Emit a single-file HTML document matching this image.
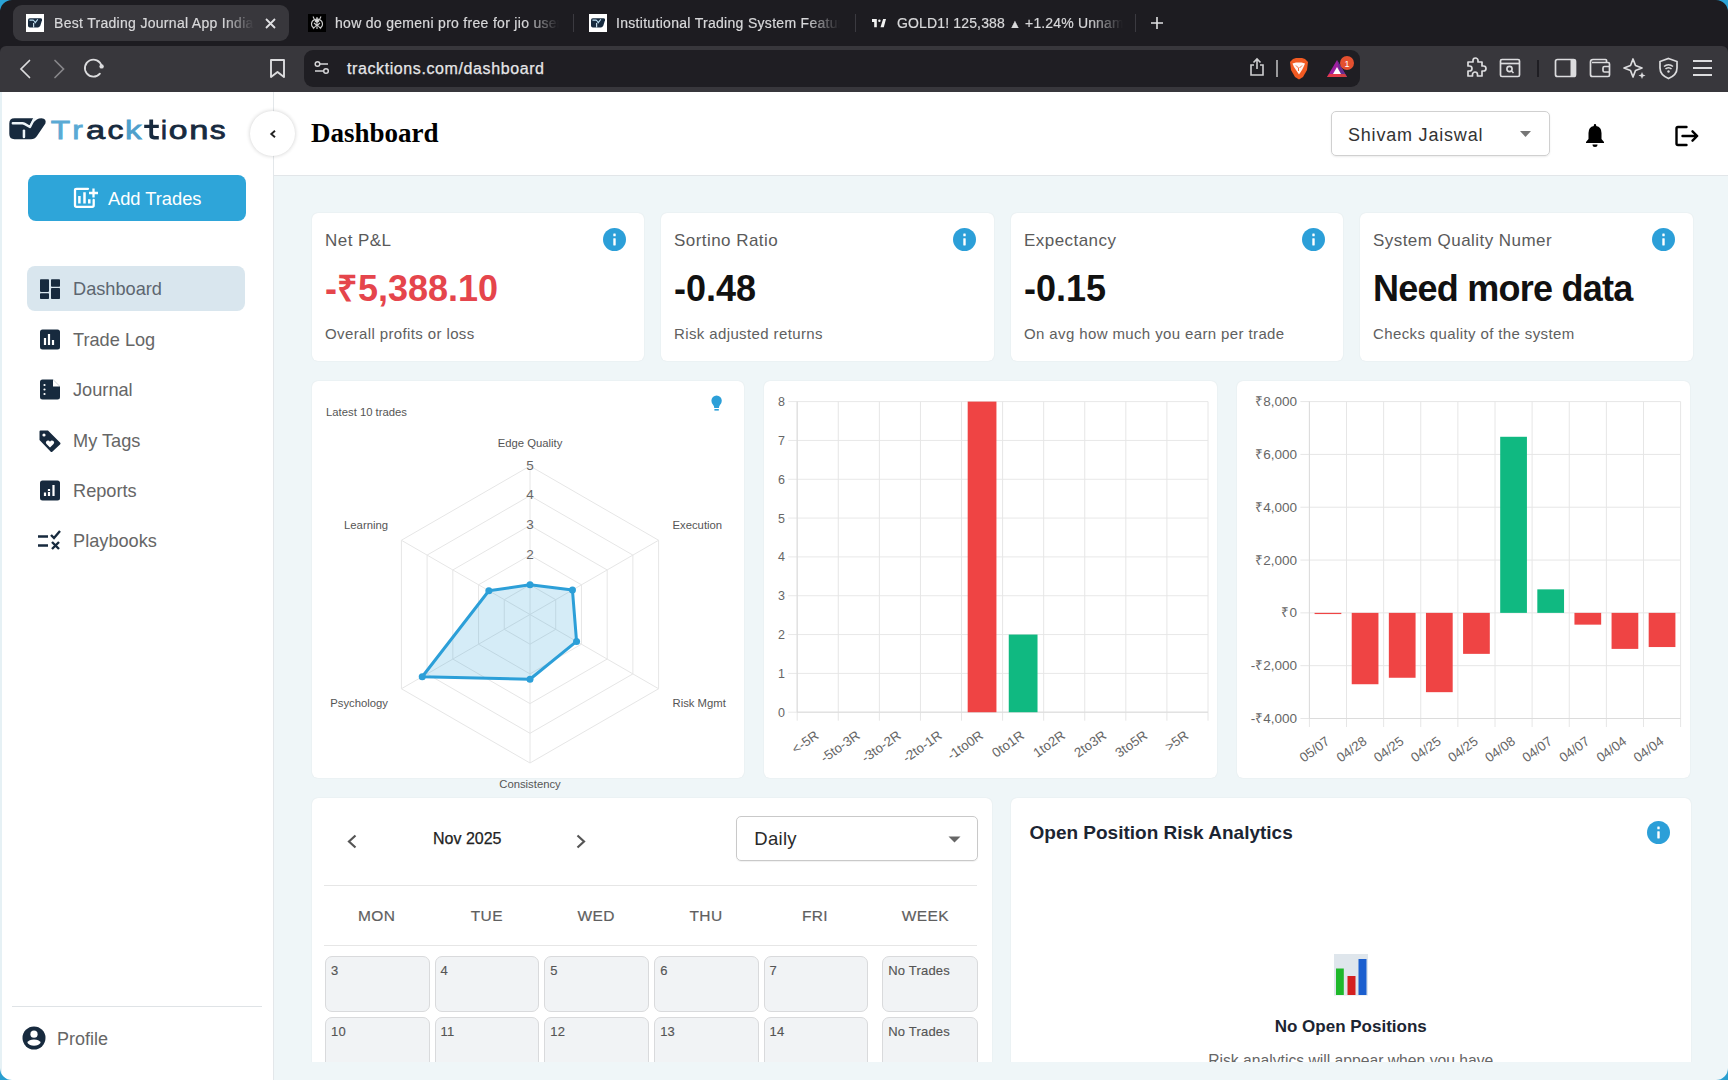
<!DOCTYPE html>
<html><head><meta charset="utf-8">
<style>
*{box-sizing:border-box;margin:0;padding:0}
html,body{width:1728px;height:1080px;overflow:hidden;background:#1c1b20;font-family:"Liberation Sans",sans-serif}
.abs{position:absolute}
#tabbar{position:absolute;left:0;top:0;width:1728px;height:46px;background:#1d1c21}
#toolbar{position:absolute;left:0;top:46px;width:1728px;height:46px;background:#38373c;border-radius:6px 6px 0 0}
#url{position:absolute;left:304px;top:50px;width:1056px;height:37px;background:#1f1e23;border-radius:9px}
.tab{position:absolute;top:5px;height:36px;color:#d8d8da;font-size:14px;line-height:36px;white-space:nowrap;overflow:hidden;letter-spacing:0.3px;-webkit-text-stroke:0.2px #d8d8da}
#page{position:absolute;left:0;top:92px;width:1728px;height:988px;background:#eff6f8;overflow:hidden}
#sidebar{position:absolute;left:0;top:0;width:274px;height:988px;background:#fff;border-right:1px solid #e3e7ea}
#header{position:absolute;left:274px;top:0;width:1454px;height:84px;background:#fff;border-bottom:1px solid #e2e6e9}
.card{position:absolute;background:#fff;border-radius:6px;box-shadow:0 0 1.5px rgba(0,0,0,0.09)}
.ct{position:absolute;font-size:17px;line-height:17px;color:#5a5a5a;letter-spacing:0.45px;white-space:nowrap}
.cv{position:absolute;font-size:36px;line-height:36px;font-weight:bold;color:#111;white-space:nowrap}
.cs{position:absolute;font-size:15px;line-height:15px;color:#606060;letter-spacing:0.38px;white-space:nowrap}
.info{position:absolute}
.cell{position:absolute;height:56.5px;background:#f1f3f5;border:1px solid #d9dadc;border-radius:7px}
.cell span{position:absolute;left:5px;top:7px;font-size:13px;line-height:13px;color:#555;-webkit-text-stroke:0.15px #555;letter-spacing:0.2px;white-space:nowrap}
.nav{position:absolute;left:27px;width:218px;height:45px;border-radius:8px}
.navt{position:absolute;left:73px;font-size:18.2px;color:#666;line-height:22px}
</style></head><body>
<div id="tabbar"></div>
<div id="toolbar"></div>
<div id="url"></div>
<!-- corners -->
<svg class="abs" style="left:0;top:0;z-index:5" width="14" height="14"><path d="M0 0H12A12 12 0 0 0 0 12Z" fill="#2aa3d6"/></svg>
<svg class="abs" style="left:1714px;top:0;z-index:5" width="14" height="14"><path d="M14 0H2A12 12 0 0 1 14 12Z" fill="#2aa3d6"/></svg>
<svg class="abs" style="left:0;top:1066px;z-index:5" width="14" height="14"><path d="M0 14H12A12 12 0 0 1 0 2Z" fill="#2a9fd0"/></svg>
<svg class="abs" style="left:1714px;top:1066px;z-index:5" width="14" height="14"><path d="M14 14H2A12 12 0 0 0 14 2Z" fill="#2a9fd0"/></svg>
<!-- active tab -->
<div class="abs" style="left:13px;top:5px;width:276px;height:36px;background:#38373c;border-radius:9px"></div>
<div class="abs" style="left:26px;top:14px;width:18px;height:18px;background:#fff"><svg width="18" height="18" viewBox="0 0 18 18"><g transform="translate(1.8 4) scale(0.4 0.45)"><path d="M5 0.5H32Q37 0.5 35.5 5L31.5 16Q29.5 21 25 21H5Q0.5 21 0.5 16.5V5Q0.5 0.5 5 0.5Z" fill="#172a3e"/><path d="M5 4.6H12.5Q14.5 4.6 15.5 6.2L18.5 10.5L24.5 3.5" stroke="#b8dcef" stroke-width="2.6" fill="none" stroke-linecap="round"/><rect x="13.2" y="11" width="2.8" height="10" fill="#cfe6f2"/></g></svg></div>
<div class="tab" style="left:54px;width:200px;-webkit-mask-image:linear-gradient(90deg,#000 85%,transparent)">Best Trading Journal App India</div>
<svg class="abs" style="left:265px;top:18px" width="11" height="11"><path d="M1 1L10 10M10 1L1 10" stroke="#e0e0e2" stroke-width="1.8"/></svg>
<!-- tab2 -->
<div class="abs" style="left:307.5px;top:14px;width:18px;height:18px;background:#000"><svg width="18" height="18" viewBox="0 0 18 18" fill="none" stroke="#cfcfcf" stroke-width="1.1"><ellipse cx="9" cy="6.5" rx="2" ry="1.6" fill="#e0e0e0"/><path d="M9 3V5M9 8V15M5 2.5L6.5 5.5Q3.5 7 3.5 10Q3.5 13 6 14M13 2.5L11.5 5.5Q14.5 7 14.5 10Q14.5 13 12 14M5 15L9 10.5L13 15M6 9L9 11.5L12 9"/></svg></div>
<div class="tab" style="left:335px;width:224px;-webkit-mask-image:linear-gradient(90deg,#000 85%,transparent)">how do gemeni pro free for jio user</div>
<div class="abs" style="left:573px;top:14px;width:1px;height:18px;background:#3b3a40"></div>
<!-- tab3 -->
<div class="abs" style="left:589px;top:14px;width:18px;height:18px;background:#fff"><svg width="18" height="18" viewBox="0 0 18 18"><g transform="translate(1.8 4) scale(0.4 0.45)"><path d="M5 0.5H32Q37 0.5 35.5 5L31.5 16Q29.5 21 25 21H5Q0.5 21 0.5 16.5V5Q0.5 0.5 5 0.5Z" fill="#172a3e"/><path d="M5 4.6H12.5Q14.5 4.6 15.5 6.2L18.5 10.5L24.5 3.5" stroke="#b8dcef" stroke-width="2.6" fill="none" stroke-linecap="round"/><rect x="13.2" y="11" width="2.8" height="10" fill="#cfe6f2"/></g></svg></div>
<div class="tab" style="left:616px;width:224px;-webkit-mask-image:linear-gradient(90deg,#000 85%,transparent)">Institutional Trading System Features</div>
<div class="abs" style="left:855px;top:14px;width:1px;height:18px;background:#3b3a40"></div>
<!-- tab4 -->
<svg class="abs" style="left:870px;top:16px" width="18" height="14" viewBox="0 0 18 14"><path d="M2 3.1H6.8V11.3H4.2V6H2Z" fill="#f2f2f2"/><circle cx="9.4" cy="4.7" r="1.2" fill="#f2f2f2"/><path d="M13.1 3.1H16L13.8 11.3H10.5Z" fill="#f2f2f2"/></svg>
<div class="tab" style="left:897px;width:226px;letter-spacing:0.15px;-webkit-mask-image:linear-gradient(90deg,#000 85%,transparent)">GOLD1! 125,388 <span style="font-size:12px">&#9650;</span> +1.24% Unnamed</div>
<div class="abs" style="left:1135px;top:14px;width:1px;height:18px;background:#3b3a40"></div>
<svg class="abs" style="left:1150px;top:16px" width="14" height="14"><path d="M7 1V13M1 7H13" stroke="#e0e0e2" stroke-width="1.6"/></svg>
<!-- toolbar icons -->
<svg class="abs" style="left:18px;top:58px" width="14" height="22"><path d="M11.5 2.5L3 11L11.5 19.5" stroke="#dcdcde" stroke-width="1.7" fill="none" stroke-linecap="round"/></svg>
<svg class="abs" style="left:52px;top:58px" width="14" height="22"><path d="M3 2.5L11.5 11L3 19.5" stroke="#87868a" stroke-width="1.7" fill="none" stroke-linecap="round"/></svg>
<svg class="abs" style="left:82px;top:57px" width="24" height="24"><path d="M17.9 16.6A8.5 8.5 0 1 1 19.6 8.9" stroke="#dcdcde" stroke-width="1.8" fill="none" stroke-linecap="round"/><circle cx="19.6" cy="9.4" r="2.2" fill="#dcdcde"/></svg>
<svg class="abs" style="left:269px;top:58px" width="18" height="22"><path d="M2 2H15V19L8.5 14L2 19Z" stroke="#dcdcde" stroke-width="1.9" fill="none" stroke-linejoin="round"/></svg>
<svg class="abs" style="left:314px;top:60px" width="16" height="16"><circle cx="3.5" cy="4" r="2.3" stroke="#d5d5d7" stroke-width="1.5" fill="none"/><path d="M6 4H14M1 11H9" stroke="#d5d5d7" stroke-width="1.5"/><circle cx="12" cy="11" r="2.3" stroke="#d5d5d7" stroke-width="1.5" fill="none"/></svg>
<div class="abs" style="left:347px;top:58.5px;font-size:16px;color:#e6e6e8;line-height:20px;letter-spacing:0.6px;-webkit-text-stroke:0.25px #e6e6e8">tracktions.com/dashboard</div>
<svg class="abs" style="left:1249px;top:57px" width="16" height="20"><path d="M8 2V12M4.5 5.5L8 2L11.5 5.5M5 8H2V18H14V8H11" stroke="#cfcfd1" stroke-width="1.6" fill="none"/></svg>
<div class="abs" style="left:1276px;top:60px;width:2px;height:17px;background:#9a9a9c"></div>
<svg class="abs" style="left:1289px;top:57px" width="20" height="23" viewBox="0 0 20 23"><path d="M4 2L7 1H13L16 2L19 5L18 13L14 20L10 22.5L6 20L2 13L1 5Z" fill="#f15a22"/><path d="M3.5 6.5L7 5.5H12.5L16 6.5L14.5 10L13 13L10 17.5L7 13L5 10Z" fill="#fff" opacity="0.95"/><path d="M7 8.5L9.5 11V14M13 8.5L10.5 11" stroke="#f15a22" stroke-width="0.9" fill="none"/></svg>
<svg class="abs" style="left:1326px;top:55px" width="30" height="26" viewBox="0 0 30 26"><path d="M11 5L21 22H1Z" fill="#9e1fa0"/><path d="M11 5L21 22L15 22Z" fill="#662d91"/><path d="M11 12L15 19H7Z" fill="#fff"/><path d="M1 22H21L19 19H3Z" fill="#ff4724" opacity="0.7"/><circle cx="21" cy="8" r="7" fill="#e4502f"/><text x="21" y="11.5" font-size="9" fill="#fff" text-anchor="middle" font-family="Liberation Sans">1</text></svg>
<svg class="abs" style="left:1465px;top:57px" width="24" height="22" viewBox="0 0 24 22"><path d="M8 3.5A2.5 2.5 0 0 1 13 3.5V5H17V9H18.5A2.5 2.5 0 0 1 18.5 14H17V19H12.5V17.5A2.5 2.5 0 0 0 7.5 17.5V19H3V14H4.5A2.5 2.5 0 0 0 4.5 9H3V5H8Z" stroke="#dcdcde" stroke-width="1.7" fill="none" stroke-linejoin="round"/></svg>
<svg class="abs" style="left:1499px;top:58px" width="22" height="20" viewBox="0 0 22 20"><rect x="1.5" y="1.5" width="19" height="17" rx="1.5" stroke="#dcdcde" stroke-width="1.7" fill="none"/><path d="M1.5 5.5H20.5" stroke="#dcdcde" stroke-width="1.7"/><circle cx="10.5" cy="11" r="2.6" stroke="#dcdcde" stroke-width="1.6" fill="none"/><path d="M12.5 13L14.5 15" stroke="#dcdcde" stroke-width="1.6"/></svg>
<div class="abs" style="left:1537px;top:60px;width:2px;height:17px;background:#1f1e23"></div>
<svg class="abs" style="left:1554px;top:58px" width="23" height="20" viewBox="0 0 23 20"><rect x="1.5" y="1.5" width="20" height="17" rx="2" stroke="#dcdcde" stroke-width="1.7" fill="none"/><rect x="16.5" y="1.5" width="5" height="17" fill="#dcdcde"/></svg>
<svg class="abs" style="left:1589px;top:58px" width="23" height="20" viewBox="0 0 23 20"><path d="M3 4.5H17.5V2.5Q17.5 1.5 16.5 1.5H4Q1.5 1.5 1.5 4V16.5Q1.5 18.5 3.5 18.5H19Q20.5 18.5 20.5 17V6Q20.5 4.5 19 4.5H17" stroke="#dcdcde" stroke-width="1.7" fill="none"/><path d="M20.5 8.5H15.5Q14 8.5 14 10V12.5Q14 14 15.5 14H20.5" stroke="#dcdcde" stroke-width="1.7" fill="none"/></svg>
<svg class="abs" style="left:1623px;top:57px" width="24" height="23" viewBox="0 0 24 23"><path d="M10 2L12.5 8.5L19 11L12.5 13.5L10 20L7.5 13.5L1 11L7.5 8.5Z" stroke="#dcdcde" stroke-width="1.7" fill="none" stroke-linejoin="round"/><path d="M19 15L20 17.5L22.5 18.5L20 19.5L19 22L18 19.5L15.5 18.5L18 17.5Z" fill="#dcdcde"/></svg>
<svg class="abs" style="left:1658px;top:57px" width="21" height="23" viewBox="0 0 21 23"><path d="M10.5 1.5L19 4.5V11Q19 18 10.5 21.5Q2 18 2 11V4.5Z" stroke="#dcdcde" stroke-width="1.7" fill="none"/><path d="M6 9.5A6.5 6.5 0 0 1 15 9.5M7.5 12A4 4 0 0 1 13.5 12" stroke="#dcdcde" stroke-width="1.5" fill="none"/><circle cx="10.5" cy="14.5" r="1.2" fill="#dcdcde"/></svg>
<svg class="abs" style="left:1692px;top:59px" width="21" height="18" viewBox="0 0 21 18"><path d="M1 2H20M1 9H20M1 16H20" stroke="#dcdcde" stroke-width="1.9"/></svg>
<div id="page">
  <div id="sidebar">
    <div class="abs" style="left:0;top:0;width:2px;height:988px;background:#e6f1f5"></div>
    <svg class="abs" style="left:9px;top:26px" width="38" height="22" viewBox="0 0 38 22"><path d="M5.5 0.3H24.5L21 7L27.8 1.6Q29.8 0.3 32.5 0.3Q37.8 0.8 36.4 5.6L27.8 18.2Q25.8 21.2 22 21.2H5.5Q0.3 21.2 0.3 16V5.5Q0.3 0.3 5.5 0.3Z" fill="#172a3e"/><path d="M3.8 5.3H13.5Q14.6 5.3 15.6 5.9L21 9L25.3 0.5" stroke="#eef5f9" stroke-width="2.4" fill="none" stroke-linecap="round" stroke-linejoin="round"/><rect x="13.7" y="11.4" width="2.5" height="8.8" rx="1.2" fill="#eef5f9"/></svg>
    <svg class="abs" style="left:50px;top:24px" width="180" height="28" viewBox="0 0 180 28" font-family="Liberation Sans" font-size="26.5" stroke-width="0.8"><text transform="translate(0.70 23) scale(1.2 1)" fill="#5aaad4" stroke="#5aaad4">T</text><text transform="translate(22.20 23) scale(1.2 1)" fill="#5aaad4" stroke="#5aaad4">r</text><text transform="translate(36.10 23) scale(1.3 1)" fill="#172a3e" stroke="#172a3e">a</text><text transform="translate(57.60 23) scale(1.2 1)" fill="#172a3e" stroke="#172a3e">c</text><text transform="translate(75.00 23) scale(1.25 1)" fill="#4ea0cc" stroke="#4ea0cc">k</text><path d="M99.3 3.6H103.1V8.7H108.8V11.9H103.1V18.2Q103.1 20 105 20H108.8V23.4H104Q99.3 23.4 99.3 19V11.9H94.2V8.7H99.3Z" fill="#172a3e" stroke="none"/><text transform="translate(111.00 23) scale(1.0 1)" fill="#172a3e" stroke="#172a3e">i</text><text transform="translate(118.75 23) scale(1.27 1)" fill="#172a3e" stroke="#172a3e">o</text><text transform="translate(139.2 23) scale(1.3 1)" fill="#172a3e" stroke="#172a3e">n</text><text transform="translate(159.70 23) scale(1.2 1)" fill="#172a3e" stroke="#172a3e">s</text></svg>
    <div class="abs" style="left:28px;top:83px;width:218px;height:46px;background:#2ea5d9;border-radius:8px"></div>
    <svg class="abs" style="left:73px;top:95px" width="27" height="23" viewBox="0 0 27 23"><path d="M15 1.8H3.5Q2 1.8 2 3.3V18.3Q2 19.8 3.5 19.8H19.2Q20.7 19.8 20.7 18.3V13" stroke="#fff" stroke-width="2.3" fill="none" stroke-linecap="round"/><path d="M6.4 9V16.5M11.5 5.3V16.5M16.3 12.3V16.5" stroke="#fff" stroke-width="2.5"/><path d="M20.5 1.5V10.5M16 6H25" stroke="#fff" stroke-width="2.3"/></svg>
    <div class="abs" style="left:108px;top:95.5px;font-size:18.3px;color:#fff;line-height:22px">Add Trades</div>
    <div class="nav" style="top:174px;background:#d9e6ee"></div>
    <svg class="abs" style="left:39px;top:187px" width="22" height="21" viewBox="0 0 22 21"><rect x="1" y="0.3" width="9" height="12.6" rx="0.8" fill="#172a3e"/><rect x="12" y="0.3" width="9" height="7.4" rx="0.8" fill="#172a3e"/><rect x="1" y="14.2" width="9" height="5.8" rx="0.8" fill="#172a3e"/><rect x="12" y="9" width="9" height="11" rx="0.8" fill="#172a3e"/></svg>
    <div class="navt" style="top:186px;color:#5d6670">Dashboard</div>
    <svg class="abs" style="left:39px;top:237px" width="22" height="22" viewBox="0 0 22 22"><rect x="1" y="0.5" width="20" height="20" rx="2.5" fill="#172a3e"/><path d="M6 9V16M10 5V16M14 11V16" stroke="#fff" stroke-width="2.2"/></svg>
    <div class="navt" style="top:237px">Trade Log</div>
    <svg class="abs" style="left:39px;top:287px" width="22" height="22" viewBox="0 0 22 22"><path d="M3.5 0.5H14L21 7.5V18A2.5 2.5 0 0 1 18.5 20.5H3.5A2.5 2.5 0 0 1 1 18V3A2.5 2.5 0 0 1 3.5 0.5Z" fill="#172a3e"/><path d="M14 0.5V7.5H21" fill="#fff"/><circle cx="5.5" cy="6" r="1.1" fill="#fff"/><circle cx="5.5" cy="10.5" r="1.1" fill="#fff"/><circle cx="5.5" cy="15" r="1.1" fill="#fff"/></svg>
    <div class="navt" style="top:287px">Journal</div>
    <svg class="abs" style="left:38px;top:337px" width="24" height="23" viewBox="0 0 24 23"><path d="M1.5 2.5Q1.5 1.5 2.5 1.5H10L22 13.5Q23 14.5 22 15.5L14.5 22.5Q13.5 23.5 12.5 22.5L1.5 11Z" fill="#172a3e"/><circle cx="6" cy="6" r="1.6" fill="#fff"/><path d="M12 18.5L8.5 15Q7 13 9 11.8Q11 11 12 12.7Q13 11 15 11.8Q17 13 15.5 15Z" fill="#fff"/></svg>
    <div class="navt" style="top:338px">My Tags</div>
    <svg class="abs" style="left:39px;top:388px" width="22" height="22" viewBox="0 0 22 22"><rect x="1" y="0.5" width="20" height="20" rx="2.5" fill="#172a3e"/><path d="M6 12.5V16M10 9V16M14.5 5V16" stroke="#fff" stroke-width="2.2"/><rect x="9" y="11" width="2" height="1" fill="#172a3e"/></svg>
    <div class="navt" style="top:388px">Reports</div>
    <svg class="abs" style="left:38px;top:438px" width="24" height="21" viewBox="0 0 24 21"><path d="M0 6.5H10M0 15.5H10" stroke="#172a3e" stroke-width="2.4"/><path d="M13 5L16 8L22 1" stroke="#172a3e" stroke-width="2.4" fill="none"/><path d="M14 12L21 19M21 12L14 19" stroke="#172a3e" stroke-width="2.4"/></svg>
    <div class="navt" style="top:438px">Playbooks</div>
    <div class="abs" style="left:12px;top:914px;width:250px;height:1px;background:#dfe3e6"></div>
    <svg class="abs" style="left:22px;top:934px" width="24" height="24" viewBox="0 0 24 24"><circle cx="12" cy="12" r="11.5" fill="#172a3e"/><circle cx="12" cy="8.2" r="3.6" fill="#fff"/><path d="M5.3 16.8Q7 13.5 12 13.5Q17 13.5 18.7 16.8Q16.5 19.7 12 19.7Q7.5 19.7 5.3 16.8Z" fill="#fff"/></svg>
    <div class="abs" style="left:57px;top:936px;font-size:18px;color:#666;line-height:22px">Profile</div>
  </div>
  <div id="header">
    <div class="abs" style="left:37px;top:24px;font-family:'Liberation Serif',serif;font-weight:bold;font-size:27px;color:#000;line-height:34px">Dashboard</div>
    <div class="abs" style="left:1057px;top:19px;width:219px;height:45px;border:1px solid #d0d0d0;border-radius:5px;box-shadow:0 1px 2px rgba(0,0,0,0.08)"></div>
    <div class="abs" style="left:1074px;top:31.5px;font-size:18px;color:#333;line-height:22px;letter-spacing:0.8px">Shivam Jaiswal</div>
    <svg class="abs" style="left:1246px;top:39px" width="12" height="7"><path d="M0 0H11L5.5 6Z" fill="#767676"/></svg>
    <svg class="abs" style="left:1310px;top:30px" width="22" height="26" viewBox="0 0 22 26"><path d="M11 2Q12.2 2 12.2 3.3V4Q17.5 5 17.5 11V17L20 20V21H2V20L4.5 17V11Q4.5 5 9.8 4V3.3Q9.8 2 11 2Z" fill="#000"/><path d="M8.5 22.5H13.5Q13.5 25 11 25Q8.5 25 8.5 22.5Z" fill="#000"/></svg>
    <svg class="abs" style="left:1398px;top:31px" width="30" height="26" viewBox="0 0 30 26"><path d="M14.5 4H6Q4.5 4 4.5 5.5V20.5Q4.5 22 6 22H14.5" stroke="#000" stroke-width="2.4" fill="none" stroke-linecap="round" stroke-linejoin="round"/><path d="M10.5 13H25M20.5 8.3L25.2 13L20.5 17.7" stroke="#000" stroke-width="2.4" fill="none" stroke-linecap="round" stroke-linejoin="round"/></svg>
  </div>
  <div class="abs" style="left:250px;top:19px;width:45px;height:45px;border-radius:50%;background:#fff;box-shadow:0 0 4px rgba(0,0,0,0.2)"></div>
  <svg class="abs" style="left:269px;top:37px" width="8" height="10"><path d="M6 1.8L2.3 5L6 8.2" stroke="#222" stroke-width="1.9" fill="none"/></svg>
  <!-- row1 -->
  <div class="card" style="left:312px;top:120.5px;width:332px;height:148.5px">
    <div class="ct" style="left:13px;top:19px">Net P&amp;L</div><svg class="info" style="right:18px;top:15px" width="23" height="23" viewBox="0 0 23 23"><circle cx="11.5" cy="11.5" r="11.5" fill="#2c9fd8"/><rect x="10.3" y="5.6" width="2.4" height="2.6" rx="0.5" fill="#fff"/><rect x="10.3" y="10.3" width="2.4" height="7.1" rx="0.4" fill="#fff"/></svg>
    <div class="cv" style="left:13px;top:58px;color:#e5454c;">-&#8377;5,388.10</div>
    <div class="cs" style="left:13px;top:113.5px">Overall profits or loss</div>
  </div>
  <div class="card" style="left:661px;top:120.5px;width:333px;height:148.5px">
    <div class="ct" style="left:13px;top:19px">Sortino Ratio</div><svg class="info" style="right:18px;top:15px" width="23" height="23" viewBox="0 0 23 23"><circle cx="11.5" cy="11.5" r="11.5" fill="#2c9fd8"/><rect x="10.3" y="5.6" width="2.4" height="2.6" rx="0.5" fill="#fff"/><rect x="10.3" y="10.3" width="2.4" height="7.1" rx="0.4" fill="#fff"/></svg>
    <div class="cv" style="left:13px;top:58px;color:#111;">-0.48</div>
    <div class="cs" style="left:13px;top:113.5px">Risk adjusted returns</div>
  </div>
  <div class="card" style="left:1011px;top:120.5px;width:332px;height:148.5px">
    <div class="ct" style="left:13px;top:19px">Expectancy</div><svg class="info" style="right:18px;top:15px" width="23" height="23" viewBox="0 0 23 23"><circle cx="11.5" cy="11.5" r="11.5" fill="#2c9fd8"/><rect x="10.3" y="5.6" width="2.4" height="2.6" rx="0.5" fill="#fff"/><rect x="10.3" y="10.3" width="2.4" height="7.1" rx="0.4" fill="#fff"/></svg>
    <div class="cv" style="left:13px;top:58px;color:#111;">-0.15</div>
    <div class="cs" style="left:13px;top:113.5px">On avg how much you earn per trade</div>
  </div>
  <div class="card" style="left:1360px;top:120.5px;width:333px;height:148.5px">
    <div class="ct" style="left:13px;top:19px">System Quality Numer</div><svg class="info" style="right:18px;top:15px" width="23" height="23" viewBox="0 0 23 23"><circle cx="11.5" cy="11.5" r="11.5" fill="#2c9fd8"/><rect x="10.3" y="5.6" width="2.4" height="2.6" rx="0.5" fill="#fff"/><rect x="10.3" y="10.3" width="2.4" height="7.1" rx="0.4" fill="#fff"/></svg>
    <div class="cv" style="left:13px;top:58px;color:#111;letter-spacing:-0.75px">Need more data</div>
    <div class="cs" style="left:13px;top:113.5px">Checks quality of the system</div>
  </div>
  <!-- row2 -->
<div class="card" style="left:312px;top:288.5px;width:432px;height:397.5px"></div>
<div class="card" style="left:764.3px;top:288.5px;width:453.2px;height:397.5px"></div>
<div class="card" style="left:1237.2px;top:288.5px;width:452.8px;height:397.5px"></div>
<svg class="abs" style="left:0;top:0" width="1728" height="988" viewBox="0 92 1728 988" font-family="Liberation Sans">
<polygon points="530.00,584.80 555.72,599.65 555.72,629.35 530.00,644.20 504.28,629.35 504.28,599.65" fill="none" stroke="#e6e6e6" stroke-width="1"/>
<polygon points="530.00,555.10 581.44,584.80 581.44,644.20 530.00,673.90 478.56,644.20 478.56,584.80" fill="none" stroke="#e6e6e6" stroke-width="1"/>
<polygon points="530.00,525.40 607.16,569.95 607.16,659.05 530.00,703.60 452.84,659.05 452.84,569.95" fill="none" stroke="#e6e6e6" stroke-width="1"/>
<polygon points="530.00,495.70 632.88,555.10 632.88,673.90 530.00,733.30 427.12,673.90 427.12,555.10" fill="none" stroke="#e6e6e6" stroke-width="1"/>
<polygon points="530.00,466.00 658.60,540.25 658.60,688.75 530.00,763.00 401.40,688.75 401.40,540.25" fill="none" stroke="#e6e6e6" stroke-width="1"/>
<line x1="530" y1="614.5" x2="530.00" y2="466.00" stroke="#e6e6e6" stroke-width="1"/>
<line x1="530" y1="614.5" x2="658.60" y2="540.25" stroke="#e6e6e6" stroke-width="1"/>
<line x1="530" y1="614.5" x2="658.60" y2="688.75" stroke="#e6e6e6" stroke-width="1"/>
<line x1="530" y1="614.5" x2="530.00" y2="763.00" stroke="#e6e6e6" stroke-width="1"/>
<line x1="530" y1="614.5" x2="401.40" y2="688.75" stroke="#e6e6e6" stroke-width="1"/>
<line x1="530" y1="614.5" x2="401.40" y2="540.25" stroke="#e6e6e6" stroke-width="1"/>
<text x="530" y="558.6" font-size="13.5" fill="#666" text-anchor="middle">2</text>
<text x="530" y="528.9" font-size="13.5" fill="#666" text-anchor="middle">3</text>
<text x="530" y="499.2" font-size="13.5" fill="#666" text-anchor="middle">4</text>
<text x="530" y="469.5" font-size="13.5" fill="#666" text-anchor="middle">5</text>
<polygon points="530.00,584.80 572.44,590.00 576.55,641.38 530.00,679.25 422.23,676.72 488.85,590.74" fill="rgba(44,159,216,0.2)" stroke="#2c9fd8" stroke-width="3" stroke-linejoin="round"/>
<circle cx="530.00" cy="584.80" r="3.5" fill="#2c9fd8"/>
<circle cx="572.44" cy="590.00" r="3.5" fill="#2c9fd8"/>
<circle cx="576.55" cy="641.38" r="3.5" fill="#2c9fd8"/>
<circle cx="530.00" cy="679.25" r="3.5" fill="#2c9fd8"/>
<circle cx="422.23" cy="676.72" r="3.5" fill="#2c9fd8"/>
<circle cx="488.85" cy="590.74" r="3.5" fill="#2c9fd8"/>
<text x="530" y="447" font-size="11.3" fill="#555" text-anchor="middle">Edge Quality</text>
<text x="672.5" y="529" font-size="11.3" fill="#555" text-anchor="start">Execution</text>
<text x="672.5" y="707" font-size="11.3" fill="#555" text-anchor="start">Risk Mgmt</text>
<text x="530" y="788" font-size="11.3" fill="#555" text-anchor="middle">Consistency</text>
<text x="388" y="707" font-size="11.3" fill="#555" text-anchor="end">Psychology</text>
<text x="388" y="529" font-size="11.3" fill="#555" text-anchor="end">Learning</text>
<text x="326" y="415.7" font-size="11.3" fill="#555">Latest 10 trades</text>
<path d="M716.6 395.6A5.2 5.2 0 0 1 721.8 400.8Q721.8 403 720 405Q719 406.2 719 408H714.2Q714.2 406.2 713.2 405Q711.4 403 711.4 400.8A5.2 5.2 0 0 1 716.6 395.6Z" fill="#2c9fd8"/><rect x="714.4" y="409" width="4.4" height="1.6" fill="#2c9fd8"/>
<line x1="788.2" y1="712.20" x2="1208" y2="712.20" stroke="#e8e8e8" stroke-width="1"/>
<text x="785" y="716.70" font-size="12.5" fill="#666" text-anchor="end">0</text>
<line x1="788.2" y1="673.38" x2="1208" y2="673.38" stroke="#e8e8e8" stroke-width="1"/>
<text x="785" y="677.88" font-size="12.5" fill="#666" text-anchor="end">1</text>
<line x1="788.2" y1="634.55" x2="1208" y2="634.55" stroke="#e8e8e8" stroke-width="1"/>
<text x="785" y="639.05" font-size="12.5" fill="#666" text-anchor="end">2</text>
<line x1="788.2" y1="595.73" x2="1208" y2="595.73" stroke="#e8e8e8" stroke-width="1"/>
<text x="785" y="600.23" font-size="12.5" fill="#666" text-anchor="end">3</text>
<line x1="788.2" y1="556.90" x2="1208" y2="556.90" stroke="#e8e8e8" stroke-width="1"/>
<text x="785" y="561.40" font-size="12.5" fill="#666" text-anchor="end">4</text>
<line x1="788.2" y1="518.08" x2="1208" y2="518.08" stroke="#e8e8e8" stroke-width="1"/>
<text x="785" y="522.58" font-size="12.5" fill="#666" text-anchor="end">5</text>
<line x1="788.2" y1="479.25" x2="1208" y2="479.25" stroke="#e8e8e8" stroke-width="1"/>
<text x="785" y="483.75" font-size="12.5" fill="#666" text-anchor="end">6</text>
<line x1="788.2" y1="440.43" x2="1208" y2="440.43" stroke="#e8e8e8" stroke-width="1"/>
<text x="785" y="444.93" font-size="12.5" fill="#666" text-anchor="end">7</text>
<line x1="788.2" y1="401.60" x2="1208" y2="401.60" stroke="#e8e8e8" stroke-width="1"/>
<text x="785" y="406.10" font-size="12.5" fill="#666" text-anchor="end">8</text>
<line x1="797.20" y1="401.6" x2="797.20" y2="720.7" stroke="#e6e6e6" stroke-width="1"/>
<line x1="838.28" y1="401.6" x2="838.28" y2="720.7" stroke="#e6e6e6" stroke-width="1"/>
<line x1="879.36" y1="401.6" x2="879.36" y2="720.7" stroke="#e6e6e6" stroke-width="1"/>
<line x1="920.44" y1="401.6" x2="920.44" y2="720.7" stroke="#e6e6e6" stroke-width="1"/>
<line x1="961.52" y1="401.6" x2="961.52" y2="720.7" stroke="#e6e6e6" stroke-width="1"/>
<line x1="1002.60" y1="401.6" x2="1002.60" y2="720.7" stroke="#e6e6e6" stroke-width="1"/>
<line x1="1043.68" y1="401.6" x2="1043.68" y2="720.7" stroke="#e6e6e6" stroke-width="1"/>
<line x1="1084.76" y1="401.6" x2="1084.76" y2="720.7" stroke="#e6e6e6" stroke-width="1"/>
<line x1="1125.84" y1="401.6" x2="1125.84" y2="720.7" stroke="#e6e6e6" stroke-width="1"/>
<line x1="1166.92" y1="401.6" x2="1166.92" y2="720.7" stroke="#e6e6e6" stroke-width="1"/>
<line x1="1208.00" y1="401.6" x2="1208.00" y2="720.7" stroke="#e6e6e6" stroke-width="1"/>
<line x1="797.2" y1="401.6" x2="797.2" y2="712.2" stroke="#dcdcdc" stroke-width="1"/>
<line x1="797.2" y1="712.2" x2="1208" y2="712.2" stroke="#dcdcdc" stroke-width="1"/>
<text transform="translate(814.24,729.7) rotate(-35)" font-size="13.3" fill="#666" text-anchor="end" dominant-baseline="hanging">&lt;-5R</text>
<text transform="translate(855.32,729.7) rotate(-35)" font-size="13.3" fill="#666" text-anchor="end" dominant-baseline="hanging">-5to-3R</text>
<text transform="translate(896.40,729.7) rotate(-35)" font-size="13.3" fill="#666" text-anchor="end" dominant-baseline="hanging">-3to-2R</text>
<text transform="translate(937.48,729.7) rotate(-35)" font-size="13.3" fill="#666" text-anchor="end" dominant-baseline="hanging">-2to-1R</text>
<rect x="967.68" y="401.60" width="28.76" height="310.60" fill="#ef4444"/>
<text transform="translate(978.56,729.7) rotate(-35)" font-size="13.3" fill="#666" text-anchor="end" dominant-baseline="hanging">-1to0R</text>
<rect x="1008.76" y="634.55" width="28.76" height="77.65" fill="#10b981"/>
<text transform="translate(1019.64,729.7) rotate(-35)" font-size="13.3" fill="#666" text-anchor="end" dominant-baseline="hanging">0to1R</text>
<text transform="translate(1060.72,729.7) rotate(-35)" font-size="13.3" fill="#666" text-anchor="end" dominant-baseline="hanging">1to2R</text>
<text transform="translate(1101.80,729.7) rotate(-35)" font-size="13.3" fill="#666" text-anchor="end" dominant-baseline="hanging">2to3R</text>
<text transform="translate(1142.88,729.7) rotate(-35)" font-size="13.3" fill="#666" text-anchor="end" dominant-baseline="hanging">3to5R</text>
<text transform="translate(1183.96,729.7) rotate(-35)" font-size="13.3" fill="#666" text-anchor="end" dominant-baseline="hanging">&gt;5R</text>
<line x1="1300.4" y1="718.50" x2="1680.6" y2="718.50" stroke="#e6e6e6" stroke-width="1"/>
<text x="1297" y="723.00" font-size="13.5" fill="#666" text-anchor="end">-&#8377;4,000</text>
<line x1="1300.4" y1="665.68" x2="1680.6" y2="665.68" stroke="#e6e6e6" stroke-width="1"/>
<text x="1297" y="670.18" font-size="13.5" fill="#666" text-anchor="end">-&#8377;2,000</text>
<line x1="1300.4" y1="612.87" x2="1680.6" y2="612.87" stroke="#e6e6e6" stroke-width="1"/>
<text x="1297" y="617.37" font-size="13.5" fill="#666" text-anchor="end">&#8377;0</text>
<line x1="1300.4" y1="560.05" x2="1680.6" y2="560.05" stroke="#e6e6e6" stroke-width="1"/>
<text x="1297" y="564.55" font-size="13.5" fill="#666" text-anchor="end">&#8377;2,000</text>
<line x1="1300.4" y1="507.23" x2="1680.6" y2="507.23" stroke="#e6e6e6" stroke-width="1"/>
<text x="1297" y="511.73" font-size="13.5" fill="#666" text-anchor="end">&#8377;4,000</text>
<line x1="1300.4" y1="454.42" x2="1680.6" y2="454.42" stroke="#e6e6e6" stroke-width="1"/>
<text x="1297" y="458.92" font-size="13.5" fill="#666" text-anchor="end">&#8377;6,000</text>
<line x1="1300.4" y1="401.60" x2="1680.6" y2="401.60" stroke="#e6e6e6" stroke-width="1"/>
<text x="1297" y="406.10" font-size="13.5" fill="#666" text-anchor="end">&#8377;8,000</text>
<line x1="1309.40" y1="401.6" x2="1309.40" y2="727.0" stroke="#e6e6e6" stroke-width="1"/>
<line x1="1346.52" y1="401.6" x2="1346.52" y2="727.0" stroke="#e6e6e6" stroke-width="1"/>
<line x1="1383.64" y1="401.6" x2="1383.64" y2="727.0" stroke="#e6e6e6" stroke-width="1"/>
<line x1="1420.76" y1="401.6" x2="1420.76" y2="727.0" stroke="#e6e6e6" stroke-width="1"/>
<line x1="1457.88" y1="401.6" x2="1457.88" y2="727.0" stroke="#e6e6e6" stroke-width="1"/>
<line x1="1495.00" y1="401.6" x2="1495.00" y2="727.0" stroke="#e6e6e6" stroke-width="1"/>
<line x1="1532.12" y1="401.6" x2="1532.12" y2="727.0" stroke="#e6e6e6" stroke-width="1"/>
<line x1="1569.24" y1="401.6" x2="1569.24" y2="727.0" stroke="#e6e6e6" stroke-width="1"/>
<line x1="1606.36" y1="401.6" x2="1606.36" y2="727.0" stroke="#e6e6e6" stroke-width="1"/>
<line x1="1643.48" y1="401.6" x2="1643.48" y2="727.0" stroke="#e6e6e6" stroke-width="1"/>
<line x1="1680.60" y1="401.6" x2="1680.60" y2="727.0" stroke="#e6e6e6" stroke-width="1"/>
<line x1="1309.4" y1="401.6" x2="1309.4" y2="718.5" stroke="#dcdcdc" stroke-width="1"/>
<line x1="1309.4" y1="718.5" x2="1680.6" y2="718.5" stroke="#dcdcdc" stroke-width="1"/>
<rect x="1314.60" y="612.87" width="26.73" height="1.20" fill="#ef4444"/>
<text transform="translate(1324.96,735.5) rotate(-36)" font-size="13.3" fill="#666" text-anchor="end" dominant-baseline="hanging">05/07</text>
<rect x="1351.72" y="612.87" width="26.73" height="71.36" fill="#ef4444"/>
<text transform="translate(1362.08,735.5) rotate(-36)" font-size="13.3" fill="#666" text-anchor="end" dominant-baseline="hanging">04/28</text>
<rect x="1388.84" y="612.87" width="26.73" height="64.89" fill="#ef4444"/>
<text transform="translate(1399.20,735.5) rotate(-36)" font-size="13.3" fill="#666" text-anchor="end" dominant-baseline="hanging">04/25</text>
<rect x="1425.96" y="612.87" width="26.73" height="79.30" fill="#ef4444"/>
<text transform="translate(1436.32,735.5) rotate(-36)" font-size="13.3" fill="#666" text-anchor="end" dominant-baseline="hanging">04/25</text>
<rect x="1463.08" y="612.87" width="26.73" height="40.99" fill="#ef4444"/>
<text transform="translate(1473.44,735.5) rotate(-36)" font-size="13.3" fill="#666" text-anchor="end" dominant-baseline="hanging">04/25</text>
<rect x="1500.20" y="436.78" width="26.73" height="176.09" fill="#10b981"/>
<text transform="translate(1510.56,735.5) rotate(-36)" font-size="13.3" fill="#666" text-anchor="end" dominant-baseline="hanging">04/08</text>
<rect x="1537.32" y="589.36" width="26.73" height="23.50" fill="#10b981"/>
<text transform="translate(1547.68,735.5) rotate(-36)" font-size="13.3" fill="#666" text-anchor="end" dominant-baseline="hanging">04/07</text>
<rect x="1574.44" y="612.87" width="26.73" height="11.78" fill="#ef4444"/>
<text transform="translate(1584.80,735.5) rotate(-36)" font-size="13.3" fill="#666" text-anchor="end" dominant-baseline="hanging">04/07</text>
<rect x="1611.56" y="612.87" width="26.73" height="36.02" fill="#ef4444"/>
<text transform="translate(1621.92,735.5) rotate(-36)" font-size="13.3" fill="#666" text-anchor="end" dominant-baseline="hanging">04/04</text>
<rect x="1648.68" y="612.87" width="26.73" height="34.17" fill="#ef4444"/>
<text transform="translate(1659.04,735.5) rotate(-36)" font-size="13.3" fill="#666" text-anchor="end" dominant-baseline="hanging">04/04</text>
</svg>
<!-- row3 -->
<div class="abs" style="left:274px;top:0;width:1454px;height:970px;overflow:hidden">
<div class="card" style="left:38px;top:706px;width:680px;height:300px">
<svg class="abs" style="left:34px;top:36px" width="12" height="15"><path d="M9.5 1.5L3 7.5L9.5 13.5" stroke="#555" stroke-width="2.2" fill="none"/></svg>
<div class="abs" style="left:121px;top:33px;font-size:16px;line-height:16px;color:#222;white-space:nowrap;-webkit-text-stroke:0.25px #222">Nov 2025</div>
<svg class="abs" style="left:263px;top:36px" width="12" height="15"><path d="M2.5 1.5L9 7.5L2.5 13.5" stroke="#555" stroke-width="2.2" fill="none"/></svg>
<div class="abs" style="left:424.2px;top:17.8px;width:241.4px;height:45px;border:1px solid #c9c9c9;border-radius:5px;box-shadow:0 1px 1px rgba(0,0,0,0.06)"></div>
<div class="abs" style="left:442.3px;top:32.3px;font-size:18.5px;line-height:18.5px;color:#2a2a2a;letter-spacing:0.3px;white-space:nowrap">Daily</div>
<svg class="abs" style="left:636px;top:38px" width="13" height="7"><path d="M0.5 0.5H12.5L6.5 6.5Z" fill="#666"/></svg>
<div class="abs" style="left:12px;top:87px;width:653px;height:1px;background:#e6e6e6"></div>
<div class="abs" style="left:4.599999999999994px;width:120px;top:109.5px;font-size:15.5px;line-height:15.5px;color:#5f5f5f;text-align:center;letter-spacing:0.4px;-webkit-text-stroke:0.2px #5f5f5f">MON</div>
<div class="abs" style="left:114.80000000000001px;width:120px;top:109.5px;font-size:15.5px;line-height:15.5px;color:#5f5f5f;text-align:center;letter-spacing:0.4px;-webkit-text-stroke:0.2px #5f5f5f">TUE</div>
<div class="abs" style="left:224.2px;width:120px;top:109.5px;font-size:15.5px;line-height:15.5px;color:#5f5f5f;text-align:center;letter-spacing:0.4px;-webkit-text-stroke:0.2px #5f5f5f">WED</div>
<div class="abs" style="left:334px;width:120px;top:109.5px;font-size:15.5px;line-height:15.5px;color:#5f5f5f;text-align:center;letter-spacing:0.4px;-webkit-text-stroke:0.2px #5f5f5f">THU</div>
<div class="abs" style="left:443px;width:120px;top:109.5px;font-size:15.5px;line-height:15.5px;color:#5f5f5f;text-align:center;letter-spacing:0.4px;-webkit-text-stroke:0.2px #5f5f5f">FRI</div>
<div class="abs" style="left:553.3px;width:120px;top:109.5px;font-size:15.5px;line-height:15.5px;color:#5f5f5f;text-align:center;letter-spacing:0.4px;-webkit-text-stroke:0.2px #5f5f5f">WEEK</div>
<div class="abs" style="left:12px;top:147px;width:653px;height:1px;background:#e6e6e6"></div>
<div class="cell" style="left:13px;top:157.5px;width:104.5px"><span>3</span></div>
<div class="cell" style="left:122.5px;top:157.5px;width:104.5px"><span>4</span></div>
<div class="cell" style="left:232.3px;top:157.5px;width:104.5px"><span>5</span></div>
<div class="cell" style="left:342.2px;top:157.5px;width:104.5px"><span>6</span></div>
<div class="cell" style="left:451.6px;top:157.5px;width:104.5px"><span>7</span></div>
<div class="cell" style="left:570.2px;top:157.5px;width:95.5px"><span>No Trades</span></div>
<div class="cell" style="left:13px;top:219.3px;width:104.5px"><span>10</span></div>
<div class="cell" style="left:122.5px;top:219.3px;width:104.5px"><span>11</span></div>
<div class="cell" style="left:232.3px;top:219.3px;width:104.5px"><span>12</span></div>
<div class="cell" style="left:342.2px;top:219.3px;width:104.5px"><span>13</span></div>
<div class="cell" style="left:451.6px;top:219.3px;width:104.5px"><span>14</span></div>
<div class="cell" style="left:570.2px;top:219.3px;width:95.5px"><span>No Trades</span></div>
</div>
<div class="card" style="left:737px;top:706px;width:679.5px;height:300px">
<div class="abs" style="left:18.5px;top:25.1px;font-size:19px;line-height:19px;font-weight:bold;color:#1c2532;white-space:nowrap">Open Position Risk Analytics</div>
<svg class="abs" style="left:635.5px;top:22.5px" width="23" height="23" viewBox="0 0 23 23"><circle cx="11.5" cy="11.5" r="11.5" fill="#2c9fd8"/><rect x="10.3" y="5.6" width="2.4" height="2.6" rx="0.5" fill="#fff"/><rect x="10.3" y="10.3" width="2.4" height="7.1" rx="0.4" fill="#fff"/></svg>
<svg class="abs" style="left:322.5px;top:156px" width="35" height="42" viewBox="0 0 35 42"><rect x="0" y="0" width="34" height="41.5" fill="#dfe6ec"/><rect x="2" y="14.5" width="7.8" height="26.5" fill="#1eb82a"/><rect x="13.5" y="22" width="8" height="19" fill="#d42020"/><rect x="24.5" y="5" width="8" height="36" fill="#1b5fcf"/></svg>
<div class="abs" style="left:0;width:679.5px;text-align:center;top:220.2px;font-size:17px;line-height:17px;font-weight:bold;color:#1c2532">No Open Positions</div>
<div class="abs" style="left:0;width:679.5px;text-align:center;top:254.7px;font-size:15.7px;line-height:15.7px;color:#666">Risk analytics will appear when you have</div>
</div>
</div>
</div>
</body></html>
